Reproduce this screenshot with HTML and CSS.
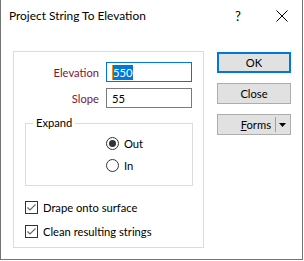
FILE: index.html
```html
<!DOCTYPE html>
<html>
<head>
<meta charset="utf-8">
<link rel="stylesheet" href="styles.css">
</head>
<body>
<div class="dialog">
  <div class="titlebar">
    <span class="title">Project String To Elevation</span>
    <span class="help">?</span>
    <span class="close-x"><svg width="12" height="12" viewBox="0 0 12 12"><path d="M0.5 0.5 L11.5 11.5 M11.5 0.5 L0.5 11.5" stroke="#000" stroke-width="1" fill="none"/></svg></span>
  </div>
  <div class="body">
    <div class="panel">
      <div class="fields">
        <label class="lbl">Elevation</label>
        <div class="input focused"><span class="sel">550</span></div>
        <label class="lbl">Slope</label>
        <div class="input">55</div>
      </div>
      <div class="group">
        <span class="legend">Expand</span>
        <div class="radio-row"><span class="radio checked"></span><span>Out</span></div>
        <div class="radio-row"><span class="radio"></span><span>In</span></div>
      </div>
      <div class="checks">
        <div class="check-row"><svg class="cb" width="13" height="13" viewBox="0 0 13 13"><rect x="0.5" y="0.5" width="12" height="12" fill="#fff" stroke="#333"/><path d="M2.5 6.5 L5 9 L10.5 3.5" stroke="#6a6a6a" stroke-width="1.2" fill="none"/></svg><span>Drape onto surface</span></div>
        <div class="check-row"><svg class="cb" width="13" height="13" viewBox="0 0 13 13"><rect x="0.5" y="0.5" width="12" height="12" fill="#fff" stroke="#333"/><path d="M2.5 6.5 L5 9 L10.5 3.5" stroke="#6a6a6a" stroke-width="1.2" fill="none"/></svg><span>Clean resulting strings</span></div>
      </div>
    </div>
    <div class="buttons">
      <div class="btn default">OK</div>
      <div class="btn">Close</div>
      <div class="btn split"><span class="split-text"><u>F</u>orms</span><span class="sep"></span><svg class="arrow" width="7" height="4" viewBox="0 0 7 4"><path d="M0 0 H7 L3.5 4 Z" fill="#000"/></svg></div>
    </div>
  </div>
</div>
</body>
</html>
```
FILE: styles.css
```css
* { box-sizing: border-box; }
html, body { margin: 0; padding: 0; background: #fff; }
body {
  font-family: "Lato", "Liberation Sans", sans-serif;
  font-size: 11.2px;
  color: #000;
}
.dialog {
  width: 303px;
  height: 260px;
  border-left: 1px solid #747474;
  border-right: 1px solid #747474;
  border-bottom: 1px solid #747474;
  background: #fff;
}
.titlebar {
  height: 31px;
  display: flex;
  align-items: center;
  padding-left: 8px;
  position: relative;
}
.title { font-size: 11.9px; flex: 1; }
.help { font-size: 13px; width: 16px; margin-right: 30px; text-align: center; }
.close-x { width: 12px; height: 12px; margin-right: 14px; display: flex; }
.close-x svg { display: block; }
.body {
  display: flex;
  align-items: flex-start;
  padding-top: 20px;
  padding-left: 12px;
}
.panel {
  width: 191px;
  height: 197px;
  border: 1px solid #dcdcdc;
  padding-top: 10px;
}
.fields {
  display: grid;
  grid-template-columns: 86px 86px;
  grid-auto-rows: 20px;
  column-gap: 6px;
  row-gap: 6px;
  align-items: center;
}
.lbl { text-align: right; color: #7d1538; padding-right: 1px; }
.input {
  height: 20px;
  border: 1px solid #7a7a7a;
  padding-left: 5px;
  display: flex;
  align-items: center;
}
.input.focused { border-color: #0078d7; }
.sel {
  background: #0078d7;
  color: #fff;
  line-height: 15px;
  border-left: 1px solid #ff8c00;
  padding-right: 1px;
}
.group {
  position: relative;
  margin-top: 15px;
  margin-left: 11px;
  width: 168px;
  height: 63px;
  border: 1px solid #dcdcdc;
  padding: 13px 0 13px 80px;
  display: flex;
  flex-direction: column;
  gap: 9px;
}
.legend {
  position: absolute;
  top: -8px;
  left: 7px;
  background: #fff;
  padding: 0 3px;
  line-height: 14px;
}
.radio-row { display: flex; align-items: center; gap: 5px; height: 13px; }
.radio {
  width: 13px;
  height: 13px;
  border: 1px solid #333;
  border-radius: 50%;
  display: flex;
  align-items: center;
  justify-content: center;
  flex: none;
}
.radio.checked::after {
  content: "";
  width: 7px;
  height: 7px;
  border-radius: 50%;
  background: #333;
}
.checks {
  margin-top: 15px;
  margin-left: 11px;
  display: flex;
  flex-direction: column;
  gap: 11px;
}
.check-row { display: flex; align-items: center; gap: 5px; height: 13px; }
.cb { display: block; flex: none; }
.buttons {
  margin-left: 13px;
  margin-top: 1px;
  display: flex;
  flex-direction: column;
  gap: 10px;
}
.btn {
  width: 74px;
  height: 21px;
  background: #e1e1e1;
  border: 1px solid #adadad;
  display: flex;
  align-items: center;
  justify-content: center;
}
.btn.default { border: 2px solid #0078d7; }
.btn.split { justify-content: flex-end; padding-right: 4px; }
.split-text { margin-right: 4px; }
.sep { width: 1px; height: 15px; background: #a0a0a0; margin-right: 3px; }
.arrow { display: block; }
```
